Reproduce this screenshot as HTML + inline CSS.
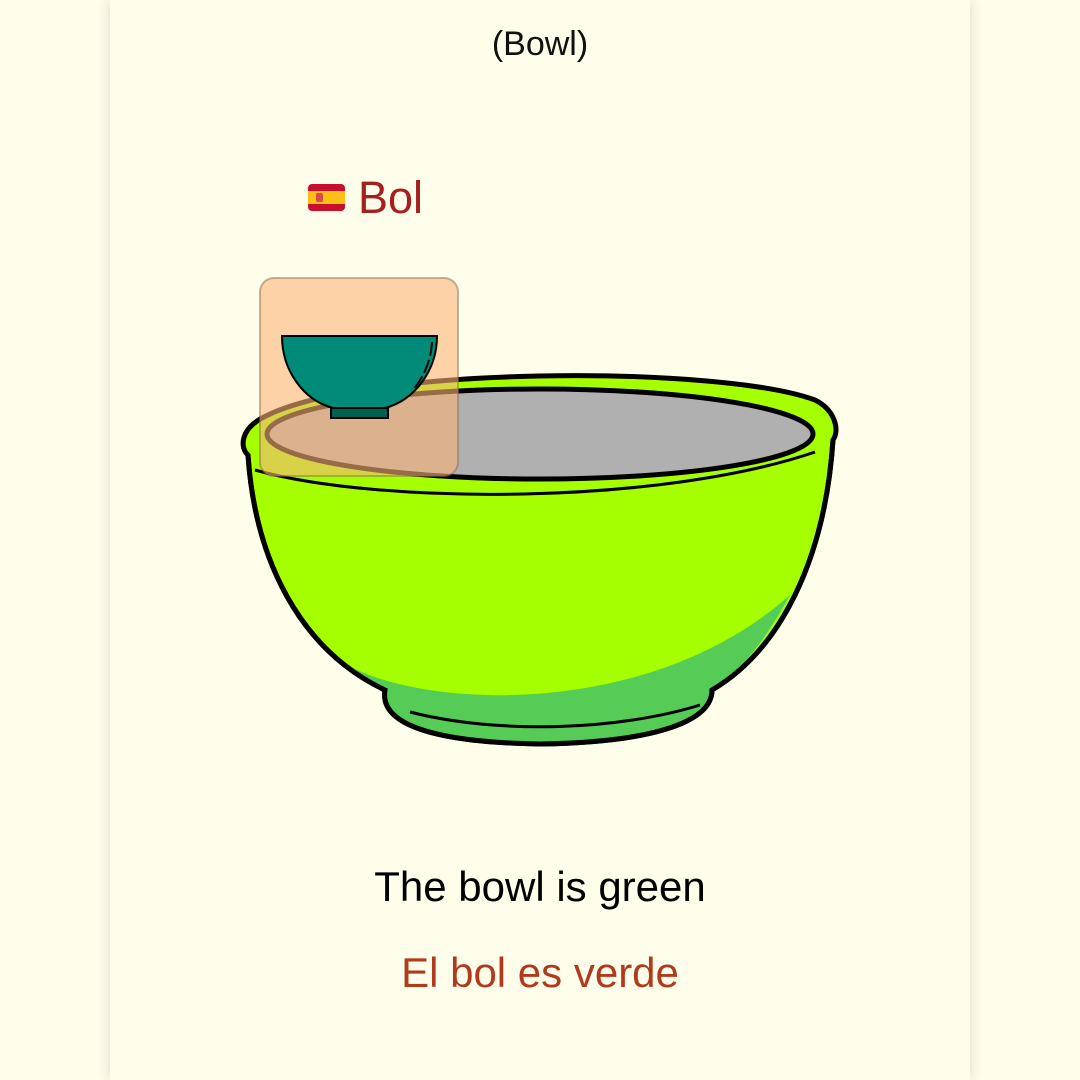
<!DOCTYPE html>
<html><head><meta charset="utf-8"><style>
html,body{margin:0;padding:0;width:1080px;height:1080px;overflow:hidden;background:#fefeeb;font-family:"Liberation Sans",sans-serif}
.card{position:absolute;left:110px;top:0;width:860px;height:1080px;background:#fefeeb;box-shadow:0 0 14px rgba(0,0,40,0.14)}
.t{position:absolute;width:1080px;left:0;text-align:center}
</style></head><body>
<div class="card"></div>
<div class="t" style="top:25px;font-size:34px;color:#111">(Bowl)</div>
<div style="position:absolute;left:308px;top:184px;width:37px;height:27px;border-radius:4px;overflow:hidden">
 <div style="height:7px;background:#c8102e"></div><div style="height:13px;background:#fcbf16;position:relative"><div style="position:absolute;left:8px;top:2px;width:7px;height:9px;background:#d64a4a;border-radius:2px"></div></div><div style="height:7px;background:#c8102e"></div>
</div>
<div style="position:absolute;left:358px;top:172px;font-size:45px;color:#a51f1f">Bol</div>
<svg style="position:absolute;left:0;top:0" width="1080" height="1080">
 <path d="M248,455 C255,560 300,650 385,690 C380,720 420,742 540,744 C660,742 712,720 712,690 C780,650 825,560 833,440 C840,430 835,410 815,400 C720,365 360,365 262,418 C240,430 240,448 248,455 Z" fill="#a6ff00" stroke="#000" stroke-width="5"/>
 <path d="M342,662 C420,710 650,720 790,595 C760,650 735,675 712,690 C712,720 660,742 540,744 C420,742 380,720 385,690 C365,680 350,672 342,662Z" fill="#55cc55"/>
 <path d="M248,455 C255,560 300,650 385,690 C380,720 420,742 540,744 C660,742 712,720 712,690 C780,650 825,560 833,440" fill="none" stroke="#000" stroke-width="5"/>
 <ellipse cx="540" cy="434" rx="273" ry="45" fill="#b0b0b0" stroke="#000" stroke-width="5"/>
 <path d="M255,470 C380,505 660,505 815,452" fill="none" stroke="#000" stroke-width="3"/>
 <path d="M410,712 C500,735 620,730 700,705" fill="none" stroke="#000" stroke-width="3"/>
 <rect x="260" y="278" width="198" height="198" rx="14" fill="rgba(250,180,120,0.6)" stroke="rgba(140,110,80,0.5)" stroke-width="2"/>
 <path d="M282,336 L437,336 C437,370 415,400 385,408 L333,408 C303,400 282,370 282,336Z" fill="#008a78" stroke="#000" stroke-width="2"/>
 <rect x="331" y="408" width="57" height="10" fill="#006050" stroke="#000" stroke-width="2"/>
 <path d="M432,342 C431,360 425,375 413,390" fill="none" stroke="#000" stroke-width="2" stroke-dasharray="14,4"/>
</svg>
<div class="t" style="top:863px;font-size:42px;color:#000">The bowl is green</div>
<div class="t" style="top:949px;font-size:42px;color:#b03a1e">El bol es verde</div>
</body></html>
